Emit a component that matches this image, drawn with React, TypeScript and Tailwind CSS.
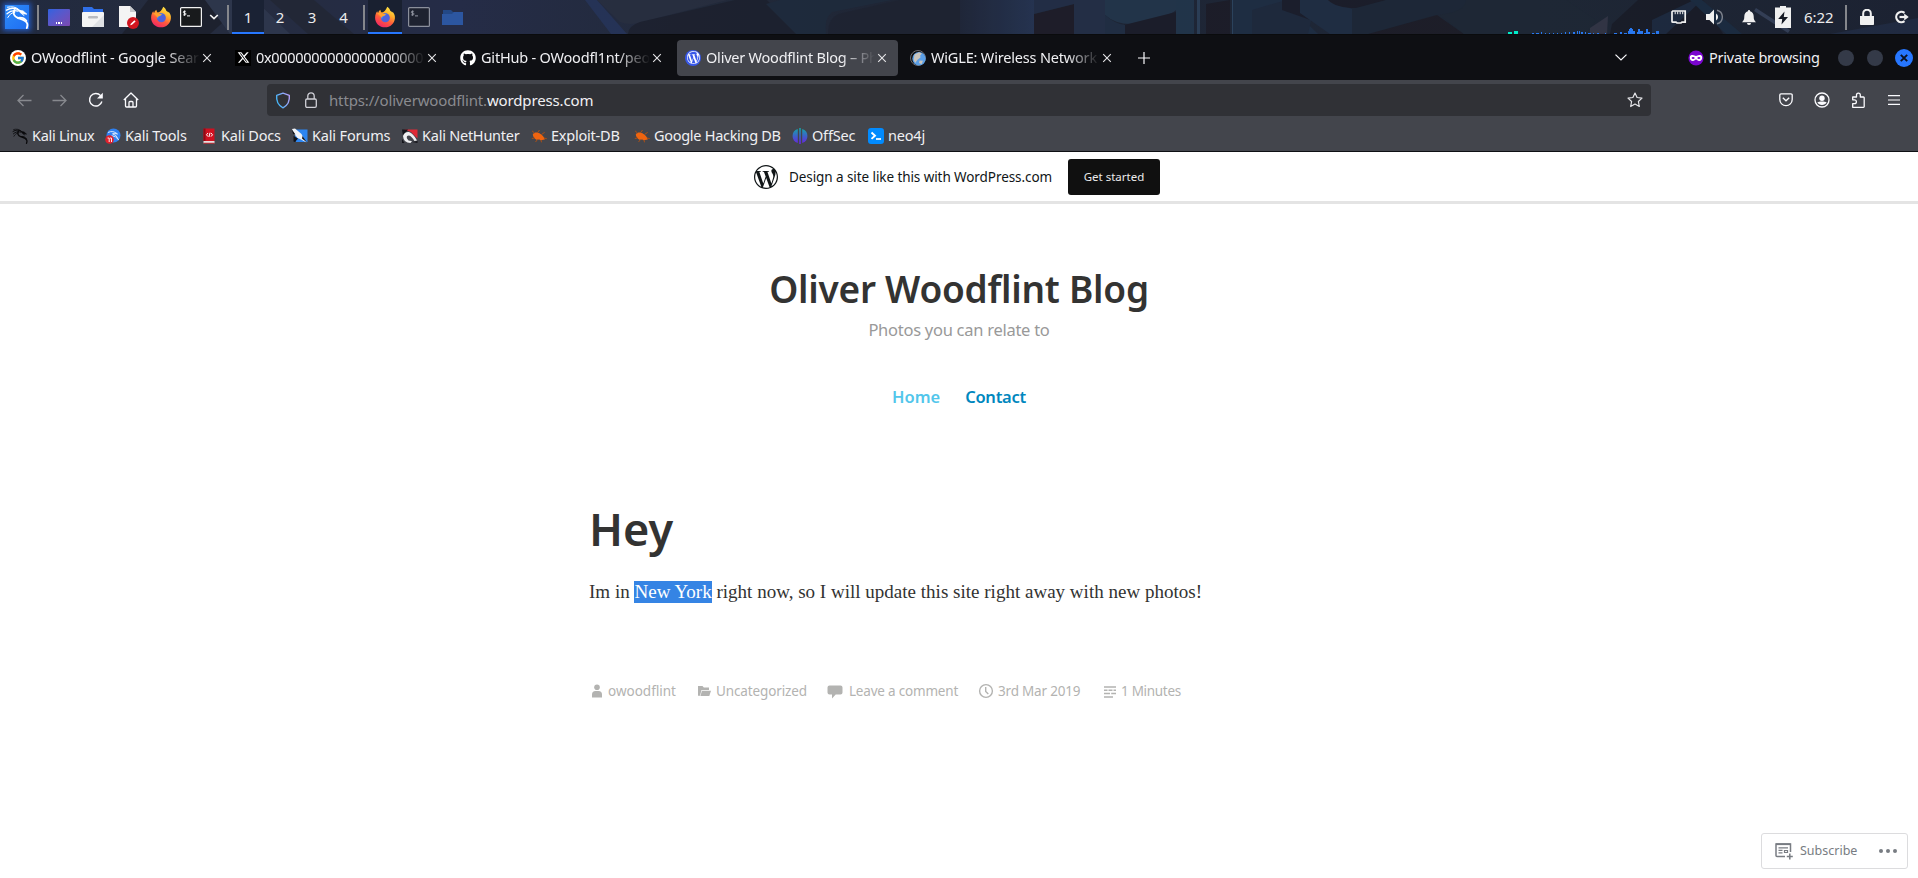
import React from "react";
import { SiWordpress } from "react-icons/si";
import { FaGithub, FaXTwitter } from "react-icons/fa6";
import { FcGoogle } from "react-icons/fc";

const UI = "font-['Noto_Sans','Open_Sans',sans-serif]";

function Dragon({ className }: { className: string }) {
  return (
    <svg viewBox="0 0 24 24" className={className} fill="none" stroke="currentColor" strokeLinecap="round">
      <path d="M1.500 5.200C6 2.400 11 2.600 15.500 6" strokeWidth="1.500" />
      <path d="M2.500 2.200C7 1.300 10.500 1.800 13.500 4.300" strokeWidth="1" />
      <path d="M2 8.800C5.500 5.500 9 5 13 6.200" strokeWidth="1.300" />
      <path d="M2.800 12.500C4.500 9.200 7 7.600 9.800 7.300" strokeWidth="1" />
      <path d="M9.500 5C7.800 8.500 9 11.500 13 13c4.500 1.500 7.800 2 9.200 5.500.5 1.500 .2 3-.4 4.500" strokeWidth="1.900" />
      <path d="M13 12.800c3.500-.6 6.500 .4 8.500 3" strokeWidth="1.500" />
      <path d="M13.500 5.200l4.500 .6 4 3.400-2.800-.2-2.200-.6 2.200 2.400-4.200-3.400z" fill="currentColor" strokeWidth="0.600" />
    </svg>
  );
}

function Firefox({ className }: { className: string }) {
  return (
    <svg viewBox="0 0 24 24" className={className}>
      <defs>
        <linearGradient id="ffBody" x1="0.8" y1="0" x2="0.3" y2="1">
          <stop offset="0" stopColor="#fff04a" />
          <stop offset="0.35" stopColor="#ffb02b" />
          <stop offset="0.65" stopColor="#ff5a3c" />
          <stop offset="1" stopColor="#f02566" />
        </linearGradient>
      </defs>
      <path
        d="M14.500 .8c2 1.600 3 3 3.400 4.700 1 .2 1.500 .9 1.800 1.700 .4-.2 .6-.4 .7-.8C22.400 9 23 11 22.800 13.500 22.300 19 17.700 23.200 12 23.200 6 23.200 1.200 18.700 1.200 12.700c0-3.500 1.300-5.600 2.300-7 .2 1 .5 1.500 1 1.900C5 5.900 6 4.900 7 4.200c0 1.300 .5 2.300 1.500 2.800C11 7 12.500 5.200 14.500 .8z"
        fill="url(#ffBody)"
      />
      <circle cx="12.400" cy="12.800" r="4.900" fill="#4f62dc" />
      <path d="M7.600 12c1-2.800 3.500-4.300 6.500-3.600l-1.600 2c-1 .8-2 .6-2.600 1.500-.7 1-.4 2-1.500 2.500-.6-.7-.9-1.400-.8-2.400z" fill="#3f86f0" />
      <path d="M3.500 8.500c2-1.500 4-1.700 6-.4 1 .7 2 .8 3.300 .7-.6 1.700-1.700 2-3 2.300-.8 .2-1.300 .9-1.400 1.900C7 11.500 6 9.500 3.500 8.500z" fill="#ffa02e" />
    </svg>
  );
}

function Terminal({ className }: { className: string }) {
  return (
    <svg viewBox="0 0 22 20" className={className}>
      <rect x="0.600" y="0.600" width="20.800" height="18.800" rx="1" fill="#181a1c" stroke="#f1f1f1" strokeWidth="1.200" />
      <path d="M5.800 4.300H4.200a.8 .8 0 0 0 0 1.800h.9a.8 .8 0 0 1 0 1.800H3.200M4.500 3.500v5.300" fill="none" stroke="#fff" strokeWidth="0.900" />
      <path d="M7 8.900h3" stroke="#fff" strokeWidth="1" />
    </svg>
  );
}

function Close({ className }: { className: string }) {
  return (
    <svg viewBox="0 0 10 10" className={className}>
      <path d="M1.200 1.200l7.600 7.600M8.800 1.200L1.200 8.800" stroke="#e6e6e8" strokeWidth="1.100" fill="none" />
    </svg>
  );
}

function Wallpaper() {
  return (
    <svg viewBox="0 0 1918 34" preserveAspectRatio="none" className="absolute inset-0 h-full w-full">
      <defs>
        <linearGradient id="wall" x1="0" x2="1" y1="0" y2="0">
          <stop offset="0" stopColor="#212a3f" />
          <stop offset="0.1" stopColor="#252c3e" />
          <stop offset="0.24" stopColor="#252c47" />
          <stop offset="0.36" stopColor="#222a3b" />
          <stop offset="0.5" stopColor="#1e2433" />
          <stop offset="0.66" stopColor="#1e2636" />
          <stop offset="0.8" stopColor="#1e2735" />
          <stop offset="1" stopColor="#1c2232" />
        </linearGradient>
        <linearGradient id="glass" x1="0" x2="1" y1="0" y2="0">
          <stop offset="0" stopColor="#20273a" />
          <stop offset="1" stopColor="#273757" />
        </linearGradient>
      </defs>
      <rect width="1918" height="34" fill="url(#wall)" />
      <g opacity="0.8">
        <path d="M122 34l26-34h100l-38 34z" fill="#1c1f2b" />
        <path d="M205 0h50l35 34h-60z" fill="#30394f" />
        <path d="M270 0h44l40 34h-46z" fill="#222734" />
        <path d="M585 0h12l30 34h-16z" fill="#26355c" />
        <path d="M597 0h130l-85 22q-12 4-22 0z" fill="#292f40" />
        <path d="M628 34q0-8 12-12L735 0h32l32 34z" fill="#1c202d" />
        <path d="M766 4l14-4h112l-60 12q-8 6-6 22h-30z" fill="#1e2b3d" />
        <path d="M828 34q0-18 14-21L900 0h60l30 34z" fill="#1e2331" />
        <path d="M960 0h74v34h-74z" fill="url(#glass)" />
        <path d="M1034 14l40-10v30h-40z" fill="#1e1c27" />
        <path d="M1034 0h40v4l-40 10z" fill="#23304a" />
        <path d="M1074 0h31v34h-31z" fill="#25314a" />
        <path d="M1105 0h80q-8 18-54 24-16 0-26-9z" fill="#24384f" />
        <path d="M1120 34v-8l56-14v22z" fill="#1b1c28" />
        <path d="M1105 15q10 9 20 10v9h-20z" fill="#213046" />
        <path d="M1176 0h18v34h-18z" fill="#22384f" />
        <path d="M1197 0h3v34h-3z" fill="#2e435d" />
        <path d="M1206 4l24-4v34h-24z" fill="#1c1b26" />
        <path d="M1232 0h1v34h-1z" fill="#2f4a66" />
        <path d="M1233 0h50l35 34h-85z" fill="#1f2f46" />
        <path d="M1252 34V10l34-10h30l-8 34z" fill="#1e2a3e" />
        <path d="M1282 0h46l-6 24-40-14z" fill="#1b1d2a" />
        <path d="M1300 0h54v34h-24l-30-21z" fill="#202f46" />
        <path d="M1328 0h138q0 12-30 15l-66 19h-18V9z" fill="#1d2838" />
        <path d="M1328 0h58l-30 8q-20 0-28-8z" fill="#1b1c28" />
        <path d="M1368 34l69-19 27 19z" fill="#1d1c26" />
        <path d="M1440 15q26-3 26-15h100l30 20-10 14h-122z" fill="#1e2835" />
        <path d="M1612 24l26-24h65l20 34H1610z" fill="#191b26" />
        <path d="M1590 28l18-12-1 18h-17z" fill="#363848" />
        <path d="M1652 20l42-20h8l-36 34h-14z" fill="#1d2b41" />
        <path d="M1690 0h12l40 34h-16z" fill="#1b2d43" />
        <path d="M1756 8l34 22-2 3-34-22z" fill="#39455e" />
        <path d="M1830 34l88-16v16z" fill="#222d45" />
      </g>
      <g fill="#00ecc8">
        <path d="M1508 32h4v2h-4zM1514 31h4v3h-4z" />
      </g>
      <g fill="#2878f0">
        <path d="M1532 33h2v1h-2zM1536 33h3v1h-3zM1541 32h1v2h-1zM1545 33h1v1h-1zM1549 33h1v1h-1zM1553 33h1v1h-1zM1557 33h1v1h-1zM1561 33h1v1h-1zM1565 32h1v2h-1zM1569 32h1v2h-1zM1573 32h2v2h-2zM1577 31h1v3h-1zM1579 31h1v3h-1zM1581 32h2v2h-2zM1585 32h1v2h-1zM1588 33h3v1h-3zM1593 33h1v1h-1zM1597 33h2v1h-2zM1605 33h1v1h-1zM1614 33h3v1h-3zM1620 32h2v2h-2zM1624 33h3v1h-3z" />
        <path d="M1628 34v-3h1v-2h1v-1h2v1h1v2h2v3zM1637 34v-2h1v-3h2v2h3v3zM1644 34v-1h2v-4h2v3h2v2zM1652 33h3v1h-3zM1656 34v-3h3v3z" />
      </g>
    </svg>
  );
}

function Sep({ className }: { className: string }) {
  return <div className={`h-[25px] w-[2px] shrink-0 bg-[#85878c] ${className}`} />;
}

function SystemPanel() {
  return (
    <div className="relative h-[34px] w-full overflow-hidden">
      <Wallpaper />
      <div className="relative flex h-[34px] items-center text-[15px] text-[#ececec]">
        <div className="ml-[5px] flex size-6 shrink-0 items-center justify-center bg-linear-to-br from-[#2f8cf8] to-[#1f6df2] shadow-[0_0_5px_2px_rgba(35,105,235,0.7)]">
          <Dragon className="size-6 text-white" />
        </div>
        <Sep className="ml-2" />
        <div className="ml-[9px] flex h-[17px] w-[22px] items-end justify-center rounded-[1px] bg-linear-to-br from-[#2c62e0] to-[#7a48b0]">
          <div className="mb-[2px] flex gap-px">
            <i className="size-[1.500px] bg-white" />
            <i className="size-[1.500px] bg-white" />
            <i className="size-[1.500px] bg-white" />
          </div>
        </div>
        <svg viewBox="0 0 22 20" className="ml-3 h-5 w-[22px]">
          <path d="M1 0h9l2 2h9v6H1z" fill="#2f6fe8" />
          <rect y="5" width="22" height="15" rx="1" fill="#f4f4f4" />
          <path d="M22 8v12H10z" fill="#dfe1e4" />
          <rect x="6" y="9" width="10" height="2.400" rx="1.200" fill="#b9bbc0" />
        </svg>
        <svg viewBox="0 0 21 23" className="ml-[14px] h-[23px] w-[21px]">
          <path d="M1 0h11l6 6v15H1z" fill="#f4f4f4" />
          <path d="M12 0l6 6h-6z" fill="#c6c8cc" />
          <circle cx="15" cy="17" r="6" fill="#d1151f" />
          <path d="M12.200 19.300l.6-1.600 3.600-3.400 1.200 1.200-3.600 3.300z" fill="#fff" />
        </svg>
        <Firefox className="ml-[11px] size-[22px]" />
        <Terminal className="ml-[8px] h-5 w-[22px]" />
        <svg viewBox="0 0 10 6" className="ml-[7px] h-[6px] w-[10px]">
          <path d="M1.200 1l3.800 3.600L8.800 1" fill="none" stroke="#f0f0f0" strokeWidth="1.700" />
        </svg>
        <Sep className="ml-2" />
        <div className="ml-[3px] flex h-full">
          <div className="flex w-8 items-center justify-center border-b-2 border-[#2777ff] bg-[#1a2234] pt-[2px]">1</div>
          <div className="flex w-8 items-center justify-center">2</div>
          <div className="flex w-8 items-center justify-center">3</div>
          <div className="flex w-[31px] items-center justify-center">4</div>
        </div>
        <Sep className="ml-1" />
        <div className="ml-[3px] flex h-full w-[34px] items-center justify-center border-b-2 border-[#2777ff] bg-[#192030]">
          <Firefox className="mt-[2px] size-[22px]" />
        </div>
        <Terminal className="ml-[6px] h-5 w-[22px] opacity-50" />
        <svg viewBox="0 0 21 17" className="ml-3 h-[17px] w-[21px]">
          <path d="M1 1h8l2 2h9v4H1z" fill="#234886" />
          <path d="M0 5h10l2-2h9v13H0z" fill="#2c56a0" />
        </svg>
        <div className="flex-1" />
        <svg viewBox="0 0 16 14" className="h-[14px] w-4">
          <path d="M1.800 1h12.400v11.200H11l-1 .8H6l-1-.8H1.800a.8 .8 0 0 1-.8-.8V1.800z" fill="none" stroke="#f0f0f0" strokeWidth="1.700" />
          <path d="M4.200 1.500v2.700M6.700 1.500v2.700M9.200 1.500v2.700M11.700 1.500v2.700" stroke="#f0f0f0" strokeWidth="1" />
        </svg>
        <svg viewBox="0 0 18 16" className="ml-[18px] h-4 w-[18px]">
          <path d="M1 5h3.500L9 .5v15L4.500 11H1z" fill="#f0f0f0" />
          <path d="M11 4.500a4 4 0 0 1 0 7z" fill="#f0f0f0" />
          <path d="M12 1.200a7 7 0 0 1 0 13.600" fill="none" stroke="#7c818c" strokeWidth="1.400" />
        </svg>
        <svg viewBox="0 0 14 15" className="ml-[19px] h-[15px] w-[14px]">
          <path d="M7 0a1.200 1.200 0 0 1 1.100 1.300C10.600 1.900 11.700 4 11.700 6.500c0 3 .6 4 2.300 5.700H0C1.700 10.500 2.300 9.500 2.300 6.500c0-2.500 1.100-4.600 3.600-5.200A1.200 1.200 0 0 1 7 0zM5 13h4a2 2 0 0 1-4 0z" fill="#f0f0f0" />
        </svg>
        <svg viewBox="0 0 16 22" className="ml-[19px] h-[22px] w-4">
          <path d="M5 0h6v1.500h5V22H0V1.500h5z" fill="#f0f0f0" />
          <path d="M9.500 5.500L3.200 13H7.200L6.500 18.500 13 11H8.800z" fill="#161a24" />
        </svg>
        <span className="ml-[13px] w-[30px] tracking-[-0.050px]">6:22</span>
        <Sep className="ml-[11px]" />
        <svg viewBox="0 0 14 16" className="ml-[13px] h-4 w-[14px]">
          <path d="M0 7h14v8.200a.8 .8 0 0 1-.8 .8H.8a.8 .8 0 0 1-.8-.8z" fill="#f0f0f0" />
          <path d="M3.200 8V4.500a3.800 3.800 0 0 1 7.600 0V8" fill="none" stroke="#f0f0f0" strokeWidth="2" />
        </svg>
        <svg viewBox="0 0 15 14" className="mr-[9px] ml-[20px] h-[14px] w-[15px]">
          <path d="M10.500 2.800A5.200 5.200 0 1 0 10.500 11.200" fill="none" stroke="#f0f0f0" strokeWidth="2.200" />
          <path d="M5.500 7h6" stroke="#f0f0f0" strokeWidth="2.200" />
          <path d="M10.200 3.500L14.700 7l-4.500 3.500z" fill="#f0f0f0" />
        </svg>
      </div>
    </div>
  );
}

function Wigle() {
  return (
    <svg viewBox="0 0 16 16" className="size-4">
      <circle cx="8" cy="8" r="7.500" fill="#0b0b0d" stroke="#77777c" strokeWidth="0.900" />
      <circle cx="9" cy="8.700" r="6.700" fill="#5b9fe6" />
      <path d="M4.500 4.500L9 2.200l3 1.300-1.800 2 .3 2-3 2.200-2.300 3.300-1.600-3z" fill="#c9c4bd" />
      <path d="M9.500 10.500l3.500 .2-1.500 3.500-2.500-1.200z" fill="#c9c4bd" />
    </svg>
  );
}

const tabs: { title: string; icon: React.ReactNode; active?: boolean; spacing: string }[] = [
  {
    title: "OWoodflint - Google Sear",
    spacing: "tracking-[-0.200px]",
    icon: (
      <span className="flex size-4 items-center justify-center rounded-full bg-white">
        <FcGoogle className="size-[14px]" />
      </span>
    ),
  },
  {
    title: "0x0000000000000000000",
    spacing: "tracking-[-0.300px]",
    icon: (
      <span className="flex size-4 items-center justify-center bg-black">
        <FaXTwitter className="size-[13px] text-white" />
      </span>
    ),
  },
  { title: "GitHub - OWoodfl1nt/peo", spacing: "tracking-[-0.200px]", icon: <FaGithub className="size-4 text-white" /> },
  {
    title: "Oliver Woodflint Blog – Ph",
    spacing: "tracking-[-0.220px]",
    active: true,
    icon: (
      <span className="flex size-4 items-center justify-center rounded-full bg-[#3858e9]">
        <SiWordpress className="size-[13px] text-white" />
      </span>
    ),
  },
  { title: "WiGLE: Wireless Network", spacing: "tracking-[-0.180px]", icon: <Wigle /> },
];

function TabBar() {
  return (
    <div className="flex h-[46px] items-center border-t border-[#0a0b0d] bg-[#0e0f13] pl-[2px] text-[14.500px] text-[#f0f0f3]">
      <div className="flex gap-1">
        {tabs.map((t) => (
          <div
            key={t.title}
            className={`flex h-9 w-[221px] shrink-0 items-center rounded pl-2 ${t.active ? "bg-[#43454c]" : ""}`}
          >
            <span className="shrink-0">{t.icon}</span>
            <span className={`ml-[5px] w-[169px] whitespace-nowrap mask-r-from-[80%] ${t.spacing}`}>{t.title}</span>
            <Close className="ml-[2px] size-[10px] shrink-0" />
          </div>
        ))}
      </div>
      <svg viewBox="0 0 12 12" className="ml-[15px] size-3 shrink-0">
        <path d="M6 0v12M0 6h12" stroke="#fbfbfe" strokeWidth="1.200" />
      </svg>
      <div className="flex-1" />
      <svg viewBox="0 0 12 7" className="h-[7px] w-3">
        <path d="M.5 .6L6 6 11.500 .6" stroke="#fbfbfe" strokeWidth="1.200" fill="none" />
      </svg>
      <svg viewBox="0 0 16 16" className="ml-[61px] size-4">
        <circle cx="8" cy="8" r="7.600" fill="#7a06cf" />
        <path d="M1.800 7.500C1.800 5.600 3 5 4.600 5 6.300 5 6.800 5.900 8 5.900S9.700 5 11.400 5c1.600 0 2.800 .6 2.800 2.500C14.200 9.700 13 11 11.200 11 9.500 11 9 9.600 8 9.600S6.500 11 4.800 11C3 11 1.800 9.700 1.800 7.500z" fill="#fff" />
        <ellipse cx="5.100" cy="8" rx="1.500" ry="1" fill="#7a06cf" />
        <ellipse cx="10.900" cy="8" rx="1.500" ry="1" fill="#7a06cf" />
      </svg>
      <span className="ml-[5px] w-[109px] whitespace-nowrap tracking-[-0.220px]">Private browsing</span>
      <span className="ml-[20px] size-4 rounded-full bg-[#343a48]" />
      <span className="ml-[13px] size-4 rounded-full bg-[#343a48]" />
      <span className="mr-[5px] ml-[12px] flex size-[18px] items-center justify-center rounded-full bg-[#2777ff]">
        <svg viewBox="0 0 8 8" className="size-2">
          <path d="M.8 .8l6.400 6.400M7.200 .8L.8 7.200" stroke="#0c1220" strokeWidth="1.900" />
        </svg>
      </span>
    </div>
  );
}

function NavBar() {
  return (
    <div className="flex h-10 items-center bg-[#43454c]">
      <svg viewBox="0 0 15 13" className="ml-[17px] h-[13px] w-[15px]">
        <path d="M14.500 6.500H1M6.500 1L1 6.500 6.500 12" stroke="#87898e" strokeWidth="1.300" fill="none" />
      </svg>
      <svg viewBox="0 0 15 13" className="ml-[20px] h-[13px] w-[15px]">
        <path d="M.5 6.500H14M8.500 1L14 6.500 8.500 12" stroke="#87898e" strokeWidth="1.300" fill="none" />
      </svg>
      <svg viewBox="0 0 16 16" className="ml-[21px] size-4">
        <path d="M13.900 9.500A6.300 6.300 0 1 1 12.600 3.600" stroke="#fbfbfe" strokeWidth="1.400" fill="none" />
        <path d="M14.800 .8V6.500H9z" fill="#fbfbfe" />
      </svg>
      <svg viewBox="0 0 16 16" className="ml-[19px] size-4">
        <path d="M.8 8L8 1l7.200 7M2.500 6.500V14a1 1 0 0 0 1 1h9a1 1 0 0 0 1-1V6.500" stroke="#fbfbfe" strokeWidth="1.300" fill="none" strokeLinejoin="round" />
        <path d="M6 15v-4.500a1 1 0 0 1 1-1h2a1 1 0 0 1 1 1V15" stroke="#fbfbfe" strokeWidth="1.300" fill="none" />
      </svg>
      <div className="ml-[128px] flex h-8 w-[1384px] items-center rounded bg-[#303136]">
        <svg viewBox="0 0 16 17" className="ml-2 h-[17px] w-4">
          <defs>
            <linearGradient id="shield" x1="0" x2="1" y1="0.600" y2="0.200">
              <stop offset="0" stopColor="#3fb5f5" />
              <stop offset="1" stopColor="#b5a0fa" />
            </linearGradient>
          </defs>
          <path d="M8 1.200l6.300 2.200c.6 5.500-1.300 9.800-6.300 12.400C3 13.200 1.100 8.900 1.700 3.400z" fill="none" stroke="url(#shield)" strokeWidth="1.400" strokeLinejoin="round" />
        </svg>
        <svg viewBox="0 0 12 16" className="ml-[14px] h-4 w-3">
          <rect x="0.700" y="7" width="10.600" height="8.300" rx="1.300" fill="none" stroke="#cfcfd6" strokeWidth="1.300" />
          <path d="M2.800 7V4a3.200 3.200 0 0 1 6.400 0v3" fill="none" stroke="#cfcfd6" strokeWidth="1.300" />
        </svg>
        <span className="ml-3 flex-1 text-[15px] tracking-[-0.150px] whitespace-nowrap text-[#8a8b90]">
          https://oliverwoodflint.<span className="text-[#f0f0f3]">wordpress.com</span>
        </span>
        <svg viewBox="0 0 16 16" className="mr-2 size-4">
          <path d="M8 1l2.100 4.500 4.900 .6-3.600 3.400 .9 5L8 12.100 3.700 14.500l.9-5L1 6.100l4.900-.6z" fill="none" stroke="#e6e6ea" strokeWidth="1.200" strokeLinejoin="round" />
        </svg>
      </div>
      <div className="flex-1" />
      <svg viewBox="0 0 14 14" className="h-[14px] w-[14px]">
        <path d="M2 .9h10a1.200 1.200 0 0 1 1.200 1.200V6.500a6.200 6.200 0 0 1-12.400 0V2.100A1.200 1.200 0 0 1 2 .9z" fill="none" stroke="#fbfbfe" strokeWidth="1.300" />
        <path d="M3.800 4.700L7 7.800l3.200-3.100" fill="none" stroke="#fbfbfe" strokeWidth="1.300" />
      </svg>
      <svg viewBox="0 0 16 16" className="ml-[21px] size-4">
        <circle cx="8" cy="8" r="7" fill="none" stroke="#fbfbfe" strokeWidth="1.300" />
        <circle cx="8" cy="6.200" r="2.700" fill="#fbfbfe" />
        <path d="M3.300 10.600C4.500 9.600 6 9.600 8 9.600s3.500 0 4.700 1C11.700 12 10 13 8 13s-3.700-1-4.700-2.400z" fill="#fbfbfe" />
      </svg>
      <svg viewBox="0 0 16 16" className="ml-[20px] size-4">
        <path d="M2.700 15.300V11.600H4.500a1.900 1.900 0 0 0 0-3.800H2.700V5H6.500V3a1.900 1.900 0 0 1 3.800 0V5h3.200a.7 .7 0 0 1 .7 .7V14.600a.7 .7 0 0 1-.7 .7z" fill="none" stroke="#fbfbfe" strokeWidth="1.300" strokeLinejoin="round" />
      </svg>
      <svg viewBox="0 0 12 10" className="mr-[18px] ml-[22px] h-[10px] w-3">
        <path d="M0 .6h12M0 5h12M0 9.400h12" stroke="#fbfbfe" strokeWidth="1.100" />
      </svg>
    </div>
  );
}

function ExploitBug() {
  return (
    <svg viewBox="0 0 16 16" className="size-4">
      <path d="M1.800 6.500C3.500 3.800 7 4.300 9.500 6c2 1.200 3.500 3 4.300 5.500l-4 .8-1.500-.8-3 .2C3.500 10.500 2 9 1.800 6.500z" fill="#f0640f" />
      <path d="M3.500 5L1.200 3M6.500 4.800L8.500 2M10.500 6.500l3.200-2.200M3.500 10L.8 10.500M6.500 11.500L4.500 14M10 12l.5 2.300M13 10l2.800 .7" stroke="#b8500f" strokeWidth="0.900" fill="none" />
    </svg>
  );
}

const bookmarks: { label: string; icon: React.ReactNode; width: string; spacing: string }[] = [
  { label: "Kali Linux", width: "w-[93px]", spacing: "tracking-[-0.280px]", icon: <Dragon className="size-4 text-[#08080a]" /> },
  {
    label: "Kali Tools",
    width: "w-[96px]",
    spacing: "tracking-[-0.200px]",
    icon: (
      <svg viewBox="0 0 16 16" className="size-4">
        <circle cx="8.500" cy="7.500" r="7" fill="#2f80f0" />
        <path d="M3 4.500q5-2.500 9.500 1.500-3-1-5-.2 4 .5 6 6-3-4.500-7-4" fill="none" stroke="#dbe8fc" strokeWidth="1" />
        <circle cx="4.500" cy="11.500" r="4.300" fill="#e0202c" />
        <path d="M2.500 10h1.700v4M5 10h1.500v4" stroke="#fff" strokeWidth="0.900" fill="none" />
      </svg>
    ),
  },
  {
    label: "Kali Docs",
    width: "w-[91px]",
    spacing: "tracking-[-0.200px]",
    icon: (
      <svg viewBox="0 0 16 16" className="size-4">
        <path d="M2.500 .5h11V13h-11z" fill="#d01020" />
        <path d="M2.500 .5h2V13h-2z" fill="#8f0a14" />
        <path d="M2.500 13h11v2.500h-11z" fill="#e8dede" />
        <path d="M2.500 14.800h11v.9h-11z" fill="#a80d18" />
        <path d="M7 5L5.500 6.800 7 8.600M10 5l1.500 1.800L10 8.600M9 4.700l-1 4.200" stroke="#fff" strokeWidth="1" fill="none" />
      </svg>
    ),
  },
  {
    label: "Kali Forums",
    width: "w-[110px]",
    spacing: "tracking-[-0.160px]",
    icon: (
      <svg viewBox="0 0 16 16" className="size-4">
        <path d="M2 1.500h13.500V14H4z" fill="#2d86f2" />
        <path d="M0 1l3-.4L9.500 6l1.500 3 3.500 5.500L9 11.500 5.500 10 2 5.500z" fill="#f1f3f7" />
        <path d="M0 1.800l3.500 4.700L1 6zM1.500 8l4.500 2.500L3 14l-1.500-.5zM10.500 8l4.500 6.500-5-4z" fill="#10131a" />
      </svg>
    ),
  },
  {
    label: "Kali NetHunter",
    width: "w-[129px]",
    spacing: "tracking-[-0.240px]",
    icon: (
      <svg viewBox="0 0 16 16" className="size-4">
        <path d="M2 1.500h13.500v9L9 4z" fill="#e02a36" />
        <path d="M0 1.500h6L1 8z" fill="#14141a" />
        <path d="M1 8q1.500-4.500 6-4 4 1 8 8.500l-2.500 .5Q9.500 8 7 7.500q-3 .2-2 3t5 2.500l-1.500 2Q1.500 15 1 8z" fill="#f0f0f2" />
        <path d="M10 14l5.500-1v2zM0 11l2.500 4H0z" fill="#14141a" />
      </svg>
    ),
  },
  { label: "Exploit-DB", width: "w-[103px]", spacing: "tracking-[-0.220px]", icon: <ExploitBug /> },
  { label: "Google Hacking DB", width: "w-[158px]", spacing: "tracking-[-0.290px]", icon: <ExploitBug /> },
  {
    label: "OffSec",
    width: "w-[76px]",
    spacing: "tracking-[-0.200px]",
    icon: (
      <svg viewBox="0 0 16 16" className="size-4">
        <defs>
          <linearGradient id="offsec" x1="0" x2="0" y1="0" y2="1">
            <stop offset="0" stopColor="#12a9a6" />
            <stop offset="0.500" stopColor="#3c62c8" />
            <stop offset="1" stopColor="#6a22e0" />
          </linearGradient>
        </defs>
        <path d="M5.800 1v14A7.300 7.300 0 0 1 5.800 1zM10.200 1v14A7.300 7.300 0 0 0 10.200 1zM7.200 0h1.600v16H7.200z" fill="url(#offsec)" />
      </svg>
    ),
  },
  {
    label: "neo4j",
    width: "w-[60px]",
    spacing: "tracking-[-0.200px]",
    icon: (
      <svg viewBox="0 0 16 16" className="size-4">
        <rect width="16" height="16" rx="3" fill="#018bff" />
        <path d="M3.500 4.500L7 7.700 3.500 10.900" stroke="#fff" strokeWidth="1.900" fill="none" />
        <path d="M8 11h5" stroke="#fff" strokeWidth="1.700" />
      </svg>
    ),
  },
];

function BookmarkBar() {
  return (
    <div className="flex h-[31px] items-center bg-[#43454c] pl-3 text-[14.500px] text-[#f0f0f3]">
      {bookmarks.map((b) => (
        <div key={b.label} className={`flex shrink-0 items-center gap-1 whitespace-nowrap ${b.width} ${b.spacing}`}>
          <span className="shrink-0">{b.icon}</span>
          {b.label}
        </div>
      ))}
    </div>
  );
}

const meta: { label: string; cell: string; icon: React.ReactNode }[] = [
  {
    label: "owoodflint",
    cell: "w-[107px]",
    icon: (
      <svg viewBox="0 0 16 16" className="mr-[1px] size-4" fill="currentColor">
        <circle cx="8" cy="4.300" r="2.800" />
        <path d="M3 14.500v-3A3.500 3.500 0 0 1 6.500 8h3a3.500 3.500 0 0 1 3.500 3.500v3z" />
      </svg>
    ),
  },
  {
    label: "Uncategorized",
    cell: "w-[131px] tracking-[-0.130px]",
    icon: (
      <svg viewBox="0 0 16 16" className="mr-[2px] size-4" fill="currentColor">
        <path d="M2 3h4.500l1.300 1.500H13V7H5.500L4 12.800H2z" />
        <path d="M5.900 7.800H15L13.300 13H4.400z" />
      </svg>
    ),
  },
  {
    label: "Leave a comment",
    cell: "w-[151px] tracking-[-0.200px]",
    icon: (
      <svg viewBox="0 0 16 16" className="mr-[4px] size-4" fill="currentColor">
        <path d="M2.500 2.500h11A2 2 0 0 1 15.500 4.500v5a2 2 0 0 1-2 2H8.700L5 15.500v-4H2.500a2 2 0 0 1-2-2v-5a2 2 0 0 1 2-2z" />
      </svg>
    ),
  },
  {
    label: "3rd Mar 2019",
    cell: "w-[124px] tracking-[-0.200px]",
    icon: (
      <svg viewBox="0 0 16 16" className="mr-[2px] size-4" fill="none" stroke="currentColor" strokeWidth="1.400">
        <circle cx="8" cy="8" r="6.400" />
        <path d="M7.700 4v4.400l2.600 2.700" />
      </svg>
    ),
  },
  {
    label: "1 Minutes",
    cell: "w-[90px] tracking-[-0.300px]",
    icon: (
      <svg viewBox="0 0 16 16" className="mr-[1px] size-4" fill="none" stroke="currentColor" strokeWidth="1.500">
        <path d="M2 4h12M2 7.300h3.500M6.500 7.300h4M11.500 7.300h2.500M2 10.600h6M9.200 10.600h4.800M2 13.900h9" />
      </svg>
    ),
  },
];

export default function App() {
  return (
    <div className={`flex h-[878px] w-[1918px] flex-col overflow-hidden bg-white ${UI}`}>
      <SystemPanel />
      <TabBar />
      <NavBar />
      <BookmarkBar />
      <div className="h-px shrink-0 bg-[#0e0f13]" />

      <div className="flex h-[52px] shrink-0 items-center justify-center border-b-3 border-[#e4e4e4] pt-px pr-[4px]">
        <SiWordpress className="size-6 text-[#101517]" />
        <span className="ml-[11px] w-[264px] text-[13.500px] tracking-[-0.080px] whitespace-nowrap text-[#101517]">
          Design a site like this with WordPress.com
        </span>
        <button className="ml-[15px] h-9 w-[92px] rounded-[3px] bg-[#101010] text-[11.500px] text-[#ececec]">Get started</button>
      </div>

      <header className="flex shrink-0 flex-col items-center pt-[62px]">
        <h1 className="text-[37px] leading-[46px] font-semibold tracking-[-0.240px] text-[#333332]">
          Oliver Woodflint Blog
        </h1>
        <p className="mt-[6px] text-[16.500px] leading-6 tracking-[-0.270px] text-[#999]">Photos you can relate to</p>
        <nav className="mt-[43px] flex gap-[25px] text-[16.500px] leading-6 font-semibold">
          <a className="text-[#52c6eb]">Home</a>
          <a className="tracking-[-0.250px] text-[#0087be]">Contact</a>
        </nav>
      </header>

      <article className="ml-[589px] flex w-[740px] shrink-0 flex-col pt-[92px] text-[#333332]">
        <h2 className="text-[45px] leading-[56px] font-semibold">Hey</h2>
        <p className="mt-[23px] font-['Liberation_Serif','Times_New_Roman',serif] text-[19.040px] leading-6 whitespace-nowrap">
          Im in <mark className="inline-block h-[22px] bg-[#3584e4] leading-[22px] text-white">New York</mark> right now, so I will
          update this site right away with new photos!
        </p>
        <footer className="mt-[75px] flex h-6 items-center text-[13.500px] text-[#b3b3b1]">
          {meta.map((m) => (
            <div key={m.label} className={`flex shrink-0 items-center gap-[2px] whitespace-nowrap ${m.cell}`}>
              {m.icon}
              {m.label}
            </div>
          ))}
        </footer>
      </article>

      <div className="mt-auto mr-[10px] mb-[9px] flex h-[36px] w-[147px] shrink-0 items-center self-end rounded-[3px] border border-[#dcdcde] bg-white text-[12.500px] text-[#787c82]">
        <svg viewBox="0 0 18 17" className="ml-[13px] h-[17px] w-[18px]" fill="none" stroke="#787c82">
          <path d="M10 13.500H2a1 1 0 0 1-1-1V1h14.500v8" strokeWidth="1.500" />
          <path d="M1 1.200h14.500" strokeWidth="1.800" />
          <path d="M3.500 4.800h9.500M3.500 7.300h4M3.500 9.800h4" strokeWidth="1.200" />
          <path d="M9.500 7.500h3v2h-3z" strokeWidth="1.200" />
          <path d="M14.800 10.500v6M11.800 13.500h6" strokeWidth="1.500" />
        </svg>
        <span className="mt-px ml-[7px] w-[57px]">Subscribe</span>
        <svg viewBox="0 0 18 4" className="ml-[22px] h-1 w-[18px]" fill="#787c82">
          <circle cx="2" cy="2" r="2" />
          <circle cx="9" cy="2" r="2" />
          <circle cx="16" cy="2" r="2" />
        </svg>
      </div>
    </div>
  );
}
